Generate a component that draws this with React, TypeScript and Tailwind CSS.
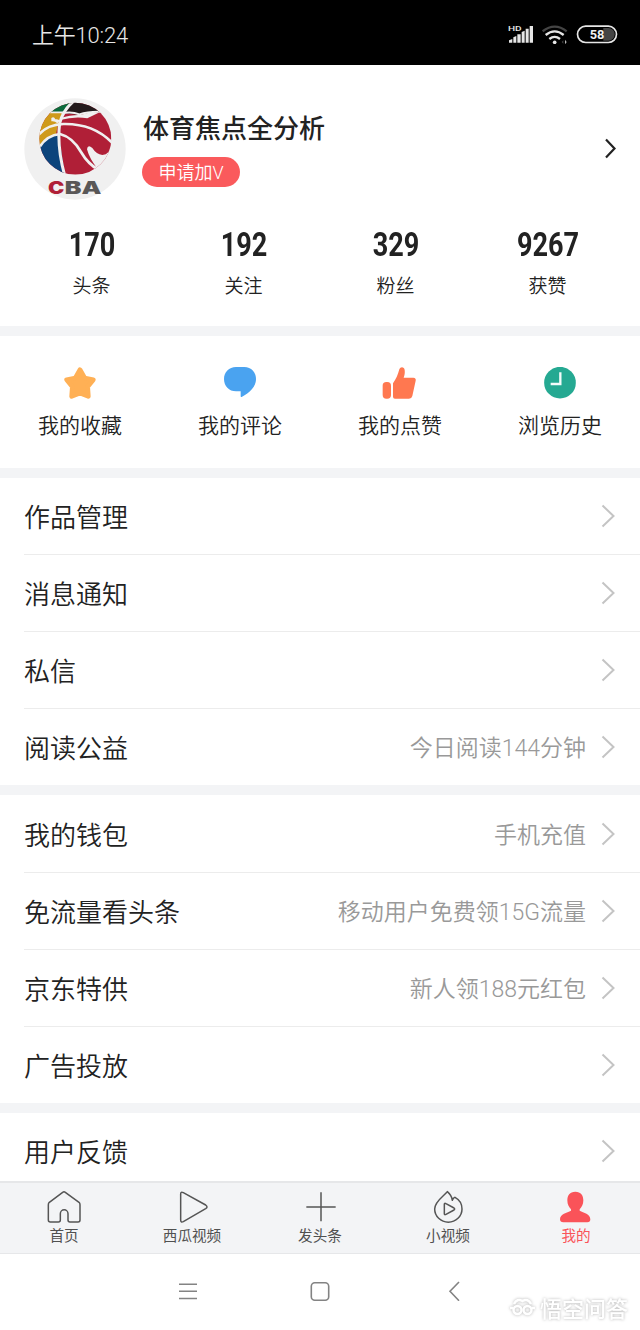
import type { ReactNode } from 'react';
import { clsx } from 'clsx';

interface Stat {
  value: string;
  label: string;
}

interface IconItem {
  label: string;
  icon: ReactNode;
  active?: boolean;
}

interface MenuItem {
  label: string;
  hint?: string;
}

const stats: Stat[] = [
  { value: '170', label: '头条' },
  { value: '192', label: '关注' },
  { value: '329', label: '粉丝' },
  { value: '9267', label: '获赞' },
];

const shortcuts: IconItem[] = [
  {
    label: '我的收藏',
    icon: (
      <svg viewBox="192 51 96 96" className="h-8 w-8">
        <path
          d="M240 59 L254 84 L280 89 L263 110 L265 139 L240 129 L215 139 L217 110 L200 89 L226 84 Z"
          fill="#ffb055"
          stroke="#ffb055"
          strokeWidth="14"
          strokeLinejoin="round"
        />
      </svg>
    ),
  },
  {
    label: '我的评论',
    icon: (
      <svg viewBox="672 51 96 96" className="h-8 w-8">
        <path
          d="M708 51 H733 C754 51 768 67 768 87 C768 110 749 128 725 141 Q722 142 722 139 V124 H708 C687 124 672 108 672 87 C672 67 687 51 708 51 Z"
          fill="#4aa3f0"
        />
      </svg>
    ),
  },
  {
    label: '我的点赞',
    icon: (
      <svg viewBox="192 51 96 96" className="h-8 w-8 overflow-visible">
        <rect x="188" y="96" width="25" height="50" rx="11" fill="#ff7850" />
        <path
          d="M219 100 C228 88 234 73 238 58 C241 49 253 50 254 60 C255 68 254 76 251 83 L280 83 Q289 84 287 92 L277 138 Q275 146 267 146 L225 146 Q219 146 219 140 Z"
          fill="#ff7850"
        />
      </svg>
    ),
  },
  {
    label: '浏览历史',
    icon: (
      <svg viewBox="672 51 96 96" className="h-8 w-8">
        <circle cx="720" cy="98" r="47.5" fill="#25a992" />
        <path d="M721 67 V102 H692" fill="none" stroke="#f4fbfa" strokeWidth="7" />
      </svg>
    ),
  },
];

const menuGroups: MenuItem[][] = [
  [
    { label: '作品管理' },
    { label: '消息通知' },
    { label: '私信' },
    { label: '阅读公益', hint: '今日阅读144分钟' },
  ],
  [
    { label: '我的钱包', hint: '手机充值' },
    { label: '免流量看头条', hint: '移动用户免费领15G流量' },
    { label: '京东特供', hint: '新人领188元红包' },
    { label: '广告投放' },
  ],
];

const tabs: IconItem[] = [
  {
    label: '首页',
    icon: (
      <svg viewBox="141 61 102 102" className="h-[34px] w-[34px]" fill="none" stroke="#555" strokeWidth="4.5">
        <path
          d="M145 151 V105 Q145 101 148 98 L188 68 Q192 65 196 68 L237 98 Q240 101 240 105 V151 Q240 157 234 157 H210 Q204 157 204 151 V132 A11.5 11.5 0 0 0 181 132 V151 Q181 157 175 157 H151 Q145 157 145 151 Z"
          strokeLinejoin="round"
        />
      </svg>
    ),
  },
  {
    label: '西瓜视频',
    icon: (
      <svg viewBox="525 61 102 102" className="h-[34px] w-[34px]" fill="none" stroke="#555" strokeWidth="4.5">
        <path d="M542 73 Q542 65 550 69 L617 106 Q625 112 617 117 L550 156 Q542 160 542 151 Z" />
      </svg>
    ),
  },
  {
    label: '发头条',
    icon: (
      <svg viewBox="909 61 102 102" className="h-[34px] w-[34px]" fill="none" stroke="#555" strokeWidth="4.5">
        <path d="M919 112 H1007 M963 68 V155" />
      </svg>
    ),
  },
  {
    label: '小视频',
    icon: (
      <svg viewBox="333 61 102 102" className="h-[34px] w-[34px]" fill="none" stroke="#555" strokeWidth="4.5">
        <path
          d="M382 66 C372 79 344 95 344 118 A41 39.5 0 0 0 426 118 C426 103 418 90 405 83 C400 84 399 88 397 92 C396 80 390 73 382 66 Z"
          strokeLinejoin="round"
        />
        <path d="M373 104 Q373 99 378 102 L402 115 Q406 118 402 121 L378 134 Q373 137 373 132 Z" />
      </svg>
    ),
  },
  {
    label: '我的',
    active: true,
    icon: (
      <svg viewBox="717 61 102 102" className="h-[34px] w-[34px]" fill="#fa5359">
        <path d="M766 66 C783 66 790 78 790 92 C790 105 785 113 779 119 V123 C791 129 811 133 811 149 Q811 158 802 158 H730 Q720 158 720 149 C720 133 741 129 753 123 V119 C747 113 742 105 742 92 C742 78 749 66 766 66 Z" />
      </svg>
    ),
  },
];

function StatusBar() {
  return (
    <header className="flex h-[65px] items-start justify-between bg-black pl-8 pr-[22px] text-[#e6e6e6]">
      <span className="pt-[21px] font-['Roboto','Noto_Sans_CJK_SC',sans-serif] text-[22px] leading-[30px] font-[350] tracking-[-0.2px]">
        上午10:24
      </span>
      <div className="flex gap-2 pt-6">
        <svg viewBox="54 42 78 60" className="h-5 w-[26px]" fill="#e6e6e6">
          <text
            x="54"
            y="62"
            fontSize="24"
            fontWeight="500"
            className="font-['Roboto',sans-serif]"
            textLength="41"
            lengthAdjust="spacingAndGlyphs"
          >
            HD
          </text>
          <path d="M57 98 V91 L67 87 V98 Z M70 98 V82 L79 78 V98 Z M82 98 V73 H92 V98 Z M95 98 V66 L104 62 V98 Z M107 98 V56 H116 V98 Z M119 98 V48 H129 V98 Z" />
        </svg>
        <svg viewBox="156 42 78 60" className="h-5 w-[26px]" fill="none" strokeWidth="7">
          <path d="M158 64 Q194 36 230 64" stroke="#444" />
          <path d="M167 75 Q194 53 221 75 M178 87 Q194 74 210 87" stroke="#e6e6e6" />
          <circle cx="194" cy="97" r="5.5" fill="#e6e6e6" />
          <path d="M225 89 L230 96 L225 103 Z" fill="#bbb" />
          <path d="M220 91 L215 96 L220 101 Z" fill="#444" />
        </svg>
        <svg viewBox="258 42 126 60" className="h-5 w-[42px]">
          <path d="M340 54 H355 A19 19 0 0 1 355 92 H340 Z" fill="#444" />
          <rect x="262.5" y="48.5" width="117" height="49" rx="24.5" fill="none" stroke="#e6e6e6" strokeWidth="5" />
          <text
            x="299"
            y="87"
            fontSize="40"
            fontWeight="700"
            fill="#f0f0f0"
            textLength="44"
            lengthAdjust="spacingAndGlyphs"
            className="font-['Roboto',sans-serif]"
          >
            58
          </text>
        </svg>
      </div>
    </header>
  );
}

function Avatar() {
  return (
    <svg viewBox="42 24 306 306" className="h-[102px] w-[102px] shrink-0">
      <clipPath id="ball">
        <circle cx="196" cy="146" r="108" />
      </clipPath>
      <circle cx="195" cy="177" r="152" fill="#f0f0f0" />
      <g clipPath="url(#ball)">
        <rect x="88" y="38" width="216" height="216" fill="#b01f37" />
        {/* panels */}
        <path d="M80 180 Q100 145 138 132 L145 100 L162 66 H110 L70 120 Z" fill="#cf9a1b" />
        <path d="M80 180 Q108 138 146 134 L166 262 H80 Z" fill="#0c447c" />
        <path d="M110 66 H164 L190 30 H140 Z" fill="#0b6b3c" />
        <path d="M162 70 L195 30 H265 L290 68 Q240 62 205 74 Z" fill="#231a1c" />
        {/* seams */}
        <g fill="none" stroke="#f0f0f0">
          <path d="M190 34 Q158 62 149 100 Q140 170 165 260" strokeWidth="9" />
          <path d="M86 134 Q112 104 160 102 Q250 100 306 158" strokeWidth="8" />
          <path d="M88 172 Q110 136 150 132 Q188 142 213 186 Q234 222 266 240" strokeWidth="8" />
          <path d="M115 67 H165" strokeWidth="5" />
          <path d="M155 70 Q185 64 208 73 Q240 62 290 66" strokeWidth="6" />
        </g>
        <path d="M150 84 Q185 74 210 75 Q240 66 266 68 L232 85 Q195 78 150 90 Z" fill="#f0f0f0" />
        <path d="M124 84 Q132 78 136 88 Q145 86 150 92 L142 100 Q134 92 124 94 Z" fill="#f0f0f0" />
        <path
          d="M312 150 L303 166 Q300 194 277 195 Q259 193 247 174 Q233 162 231 178 Q238 205 262 236 L320 264 Z"
          fill="#f0f0f0"
        />
      </g>
      <text
        x="114"
        y="312"
        fontSize="53"
        fontWeight="900"
        textLength="49"
        lengthAdjust="spacingAndGlyphs"
        fill="#b01f37"
        className="font-['Inter',sans-serif]"
      >
        C
      </text>
      <text
        x="164"
        y="312"
        fontSize="53"
        fontWeight="900"
        textLength="110"
        lengthAdjust="spacingAndGlyphs"
        fill="#595757"
        className="font-['Inter',sans-serif]"
      >
        BA
      </text>
    </svg>
  );
}

function Profile() {
  return (
    <section className="h-[261px] pt-[33px]">
      <div className="flex h-[102px] pl-6 pr-6">
        <Avatar />
        <div className="ml-4 flex-1 pt-3">
          <h1 className="ml-px text-[26px] leading-[34px] font-medium">体育焦点全分析</h1>
          <span className="mt-[13px] flex h-[30px] w-[98px] items-center justify-center rounded-full bg-[#fa5a5c] pt-0.5 font-['Roboto','Noto_Sans_CJK_SC',sans-serif] text-[18px] leading-7 font-[350] text-white">
            申请加V
          </span>
        </div>
        <svg viewBox="0 0 12 22" className="mt-[39px] h-[22px] w-3" fill="none" stroke="#222" strokeWidth="2.2">
          <path d="M2 2.5 L10.5 11.5 L2 20.5" />
        </svg>
      </div>
      <div className="grid grid-cols-4 pl-4 pr-4 pt-[27px] text-center">
        {stats.map((stat) => (
          <div key={stat.label}>
            <div className="h-9 scale-x-[0.82] font-['Roboto',sans-serif] text-[33px] leading-9 font-bold">
              {stat.value}
            </div>
            <div className="mt-2 -ml-px text-[19px] leading-7 font-[350]">{stat.label}</div>
          </div>
        ))}
      </div>
    </section>
  );
}

function MenuRow({ label, hint, last }: MenuItem & { last?: boolean }) {
  return (
    <li className={clsx('ml-6 flex items-center pr-[25px]', last ? 'h-[76px]' : 'h-[77px] border-b border-[#ececec]')}>
      <span className="flex-1 text-[26px] leading-9 font-[350]">{label}</span>
      {hint && (
        <span className="mr-[15px] pt-[3px] font-['Roboto','Noto_Sans_CJK_SC',sans-serif] text-[23px] leading-9 font-[350] text-[#999]">
          {hint}
        </span>
      )}
      <svg viewBox="0 0 14 24" className="h-6 w-3.5" fill="none" stroke="#c4c4c4" strokeWidth="2">
        <path d="M1.5 1.5 L12.5 12 L1.5 22.5" />
      </svg>
    </li>
  );
}

function Divider() {
  return <div className="h-2.5 shrink-0 bg-[#f3f4f6]" />;
}

function TabBar() {
  return (
    <nav className="grid h-[73px] shrink-0 grid-cols-5 border-t-2 border-b border-[#e6e7e9] bg-[#f3f4f6]">
      {tabs.map((tab) => (
        <div
          key={tab.label}
          className={clsx('flex flex-col items-center pt-[7px]', tab.active ? 'text-[#fa5359]' : 'text-[#505050]')}
        >
          {tab.icon}
          <span className="mt-px text-[14.6px] leading-5">{tab.label}</span>
        </div>
      ))}
    </nav>
  );
}

function SystemNav() {
  return (
    <footer className="relative h-[76px] shrink-0 bg-white">
      <div className="flex items-center gap-[113px] pl-[178px] pt-[27px]">
        <svg viewBox="0 0 20 20" className="h-5 w-5" stroke="#838383" strokeWidth="1.6">
          <path d="M1 3.3 H19 M1 10.3 H19 M1 17.5 H19" />
        </svg>
        <svg viewBox="0 0 20 20" className="-ml-px h-5 w-5" fill="none" stroke="#838383" strokeWidth="1.6">
          <rect x="1.3" y="1.8" width="17.4" height="17.4" rx="3.5" />
        </svg>
        <svg viewBox="0 0 20 20" className="h-5 w-5" fill="none" stroke="#838383" strokeWidth="1.6">
          <path d="M16 1 L7 10.3 L16 19.7" />
        </svg>
      </div>
      {/* watermark */}
      <div className="absolute top-[37px] left-[509px] flex items-center gap-1 text-white drop-shadow-[0_0_1.5px_rgba(0,0,0,0.3)]">
        <svg viewBox="0 0 27 22" className="h-[22px] w-[27px]" fill="none" stroke="#fff" strokeWidth="2.5">
          <path d="M5 8 Q8 2 13.5 5 Q19 2 22 8" />
          <circle cx="8.5" cy="14" r="4" />
          <circle cx="18.5" cy="14" r="4" />
          <path d="M1 12 H4 M23 12 H26" />
        </svg>
        <span className="text-[22px] leading-8 font-medium">悟空问答</span>
      </div>
    </footer>
  );
}

export default function App() {
  return (
    <div className="flex h-[1330px] w-[640px] flex-col overflow-hidden bg-white font-['Noto_Sans_CJK_SC',sans-serif] text-[#222]">
      <StatusBar />
      <Profile />
      <Divider />
      <section className="grid h-[132px] shrink-0 grid-cols-4 pt-[31px]">
        {shortcuts.map((item) => (
          <div key={item.label} className="flex flex-col items-center">
            {item.icon}
            <span className="mt-[9px] text-[21px] leading-8 font-[350]">{item.label}</span>
          </div>
        ))}
      </section>
      <Divider />
      {menuGroups.map((group, index) => (
        <div key={index} className="shrink-0">
          <ul className={clsx(index > 0 && 'pt-px')}>
            {group.map((item, i) => (
              <MenuRow key={item.label} {...item} last={i === group.length - 1} />
            ))}
          </ul>
          <Divider />
        </div>
      ))}
      <ul className="h-[68px] shrink-0 overflow-hidden">
        <MenuRow label="用户反馈" last />
      </ul>
      <TabBar />
      <SystemNav />
    </div>
  );
}
